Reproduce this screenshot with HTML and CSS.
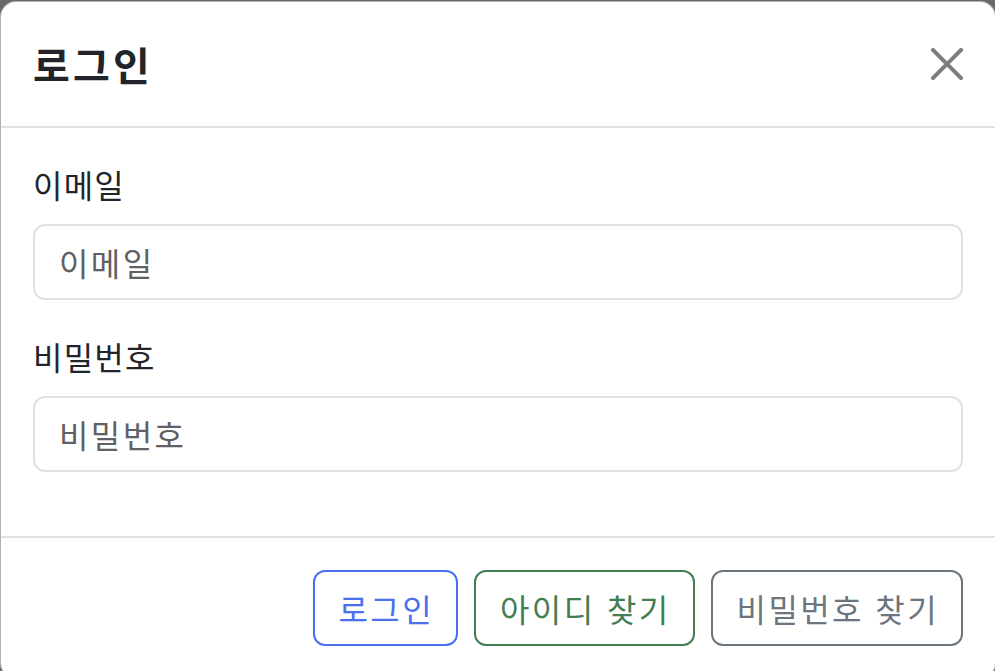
FILE: index.html
```html
<!DOCTYPE html>
<html lang="ko">
<head>
<meta charset="utf-8">
<title>로그인</title>
<link rel="stylesheet" href="styles.css">
</head>
<body>
<div class="modal">
  <div class="modal-header">
    <h5 class="modal-title">로그인</h5>
    <button class="btn-close" type="button" aria-label="Close">
      <svg viewBox="0 0 16 16" width="32" height="32"><path d="M.293.293a1 1 0 0 1 1.414 0L8 6.586 14.293.293a1 1 0 1 1 1.414 1.414L9.414 8l6.293 6.293a1 1 0 0 1-1.414 1.414L8 9.414l-6.293 6.293a1 1 0 0 1-1.414-1.414L6.586 8 .293 1.707a1 1 0 0 1 0-1.414z"/></svg>
    </button>
  </div>
  <div class="modal-body">
    <div class="field">
      <label class="form-label" for="email">이메일</label>
      <input class="form-control" id="email" type="email" placeholder="이메일">
    </div>
    <div class="field">
      <label class="form-label" for="pw">비밀번호</label>
      <input class="form-control" id="pw" type="password" placeholder="비밀번호">
    </div>
  </div>
  <div class="modal-footer">
    <button class="btn btn-primary" type="button">로그인</button>
    <button class="btn btn-success" type="button">아이디 찾기</button>
    <button class="btn btn-secondary" type="button">비밀번호 찾기</button>
  </div>
</div>
</body>
</html>
```
FILE: styles.css
```css
html, body {
  margin: 0;
  padding: 0;
  overflow: hidden;
  height: 100%;
}
body {
  background: #6a6a6a;
  font-family: "Noto Sans CJK KR", "Noto Sans CJK SC", sans-serif;
  color: #212529;
  letter-spacing: 0.075em;
}
.modal {
  margin-top: 1px;
  width: 996px;
  box-sizing: border-box;
  background: #fff;
  border: 1px solid rgba(0,0,0,.3);
  border-radius: 16px;
}
.modal-header {
  display: flex;
  align-items: center;
  padding: 32px;
  border-bottom: 2px solid #dee2e6;
}
.modal-title {
  margin: 0;
  font-size: 40px;
  line-height: 60px;
  font-weight: 700;
  letter-spacing: 0.08em;
  color: #212529;
}
.btn-close {
  margin: -16px -16px -16px auto;
  padding: 16px;
  width: 64px;
  height: 64px;
  box-sizing: border-box;
  border: 0;
  background: transparent;
  display: flex;
  align-items: center;
  justify-content: center;
}
.btn-close svg {
  display: block;
  fill: #000;
  opacity: .5;
}
.modal-body {
  padding: 32px;
}
.field {
  display: flex;
  flex-direction: column;
  margin-bottom: 32px;
}
.form-label {
  font-size: 32px;
  line-height: 48px;
  margin-bottom: 16px;
  color: #212529;
}
.form-control {
  font-family: inherit;
  font-size: 32px;
  line-height: 48px;
  letter-spacing: 0.075em;
  padding: 12px 24px;
  border: 2px solid #dee2e6;
  border-radius: 12px;
  color: #212529;
  background: #fff;
  outline: none;
}
.form-control::placeholder {
  color: #5f6164;
  opacity: 1;
}
.modal-footer {
  display: flex;
  justify-content: flex-end;
  align-items: center;
  padding: 24px;
  border-top: 2px solid #dee2e6;
}
.btn {
  margin: 8px;
  font-family: inherit;
  font-size: 32px;
  line-height: 48px;
  letter-spacing: 0.075em;
  padding: 12px 22px 12px 24px;
  border: 2px solid;
  border-radius: 12px;
  background: transparent;
}
.btn-primary {
  color: #4a70ee;
  border-color: #4a70ee;
}
.btn-success {
  color: #437e53;
  border-color: #437e53;
}
.btn-secondary {
  color: #6c757d;
  border-color: #6c757d;
}
```
